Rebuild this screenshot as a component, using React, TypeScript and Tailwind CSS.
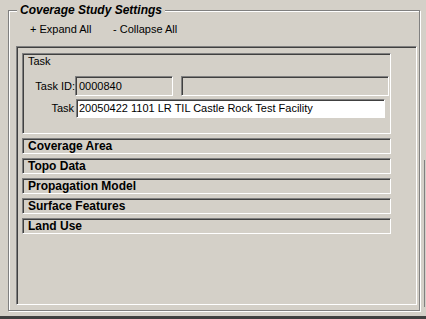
import React from "react";

// classic 3D sunken edge: gray/dark on top-left, white on bottom-right
const sunken =
  "border border-t-[#808080] border-l-[#808080] border-b-white border-r-white shadow-[inset_1px_1px_0_#404040]";

const sections = [
  "Coverage Area",
  "Topo Data",
  "Propagation Model",
  "Surface Features",
  "Land Use",
];

const SectionHeader: React.FC<{ title: string }> = ({ title }) => (
  <div className={`${sunken} h-[16px] w-[369px] pl-[5px] pt-[1px]`}>
    <div className="text-[12px] leading-[13px] font-bold text-black">{title}</div>
  </div>
);

const App: React.FC = () => {
  return (
    <div className="w-[426px] h-[319px] bg-[#d4d0c8] flex flex-col overflow-hidden font-['Liberation_Sans',Arial,sans-serif] text-black">
      <div className="flex-1 flex pl-[8px] pt-[10px] pb-[5px]">
        {/* Group box */}
        <div className="relative w-[412px] border border-[#808080] shadow-[inset_1px_1px_0_#fff,1px_1px_0_#fff] flex flex-col pt-[12px]">
          <div className="absolute left-[8px] -top-[8px] px-[3px] bg-[#d4d0c8] text-[12px] leading-[14px] font-bold italic">
            Coverage Study Settings
          </div>

          {/* toolbar */}
          <div className="flex pl-[21px] text-[11px] leading-[13px]">
            <span className="w-[83px]">+ Expand All</span>
            <span>- Collapse All</span>
          </div>

          {/* scroll panel */}
          <div className={`${sunken} flex-1 ml-[7px] mr-[2px] mt-[10px] mb-[5px] pl-[5px] pt-[6px] flex flex-col gap-[4px]`}>
            {/* Task */}
            <div className={`${sunken} h-[81px] w-[369px] pt-[1px] flex flex-col text-[11px] leading-[13px]`}>
              <div className="pl-[5px]">Task</div>

              <div className="flex items-center mt-[8px]">
                <div className="w-[52px] text-right">Task ID:</div>
                <div className={`${sunken} w-[98px] h-[20px] pl-[3px] flex items-center`}>0000840</div>
                <div className={`${sunken} w-[208px] h-[20px] ml-[8px]`} />
              </div>

              <div className="flex items-center mt-[3px]">
                <div className="w-[52px] pr-[1px] text-right">Task</div>
                <div
                  className={`${sunken} w-[309px] h-[19px] ml-[1px] pl-[2px] bg-white flex items-center whitespace-nowrap overflow-hidden`}
                >
                  20050422 1101 LR TIL Castle Rock Test Facility
                </div>
              </div>
            </div>

            {sections.map((s) => (
              <SectionHeader key={s} title={s} />
            ))}
          </div>
        </div>

        {/* edge of the neighbouring window */}
        <div className="flex-1 flex justify-end pt-[150px] pb-[4px]">
          <div className="w-[1px] mr-[1px] bg-[#808080]" />
        </div>
      </div>
      <div className="h-[3px] bg-[#404040]" />
    </div>
  );
};

export default App;
